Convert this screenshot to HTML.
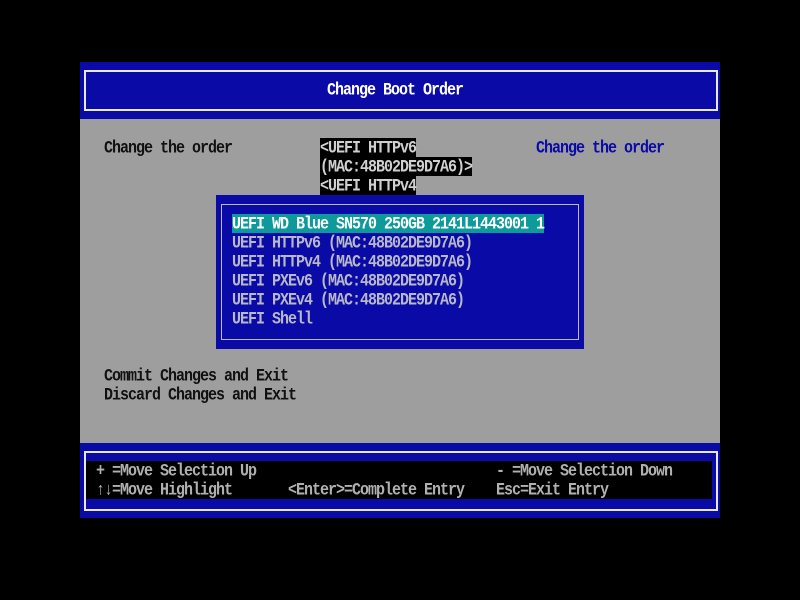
<!DOCTYPE html>
<html><head><meta charset="utf-8"><style>
html,body{margin:0;padding:0;background:#000;width:800px;height:600px;overflow:hidden}
.a{position:absolute}
.t{position:absolute;font-family:"Liberation Mono",monospace;font-size:15px;letter-spacing:-1px;line-height:19px;height:19px;white-space:pre;font-weight:bold;transform:translateY(1px) scaleY(1.15);transform-origin:0 50%}
</style></head><body>
<div class="a" style="left:80px;top:62px;width:640px;height:456px;background:#0a0aa6"></div>
<div class="a" style="left:84px;top:70px;width:630px;height:37px;border:2px solid #e8e8e8"></div>
<div class="t" style="left:327px;top:80px;color:#fff">Change Boot Order</div>
<div class="a" style="left:80px;top:119px;width:640px;height:324px;background:#9e9e9e"></div>
<div class="t" style="left:104px;top:138px;color:#111">Change the order</div>
<div class="t" style="left:536px;top:138px;color:#0a0aa6">Change the order</div>
<div class="a" style="left:320px;top:138px;width:96px;height:19px;background:#000"></div>
<div class="a" style="left:320px;top:157px;width:152px;height:19px;background:#000"></div>
<div class="a" style="left:320px;top:176px;width:96px;height:19px;background:#000"></div>
<div class="t" style="left:320px;top:138px;color:#d0d0d0">&lt;UEFI HTTPv6</div>
<div class="t" style="left:320px;top:157px;color:#d0d0d0">(MAC:48B02DE9D7A6)&gt;</div>
<div class="t" style="left:320px;top:176px;color:#d0d0d0">&lt;UEFI HTTPv4</div>
<div class="a" style="left:216px;top:195px;width:368px;height:154px;background:#0a0aa6"></div>
<div class="a" style="left:221px;top:204px;width:356px;height:134px;border:1px solid #b8b8c8"></div>
<div class="a" style="left:232px;top:214px;width:312px;height:19px;background:#0e9a9a"></div>
<div class="t" style="left:232px;top:214px;color:#fff">UEFI WD Blue SN570 250GB 2141L1443001 1</div>
<div class="t" style="left:232px;top:233px;color:#b8b8c8">UEFI HTTPv6 (MAC:48B02DE9D7A6)</div>
<div class="t" style="left:232px;top:252px;color:#b8b8c8">UEFI HTTPv4 (MAC:48B02DE9D7A6)</div>
<div class="t" style="left:232px;top:271px;color:#b8b8c8">UEFI PXEv6 (MAC:48B02DE9D7A6)</div>
<div class="t" style="left:232px;top:290px;color:#b8b8c8">UEFI PXEv4 (MAC:48B02DE9D7A6)</div>
<div class="t" style="left:232px;top:309px;color:#b8b8c8">UEFI Shell</div>
<div class="t" style="left:104px;top:366px;color:#111">Commit Changes and Exit</div>
<div class="t" style="left:104px;top:385px;color:#111">Discard Changes and Exit</div>
<div class="a" style="left:84px;top:451px;width:630px;height:56px;border:2px solid #e8e8e8"></div>
<div class="a" style="left:86px;top:461px;width:626px;height:38px;background:#000"></div>
<div class="t" style="left:96px;top:461px;color:#b0b0b0">+ =Move Selection Up</div>
<div class="t" style="left:496px;top:461px;color:#b0b0b0">- =Move Selection Down</div>
<div class="t" style="left:96px;top:480px;color:#b0b0b0">↑↓=Move Highlight</div>
<div class="t" style="left:288px;top:480px;color:#b0b0b0">&lt;Enter&gt;=Complete Entry</div>
<div class="t" style="left:496px;top:480px;color:#b0b0b0">Esc=Exit Entry</div>
</body></html>
